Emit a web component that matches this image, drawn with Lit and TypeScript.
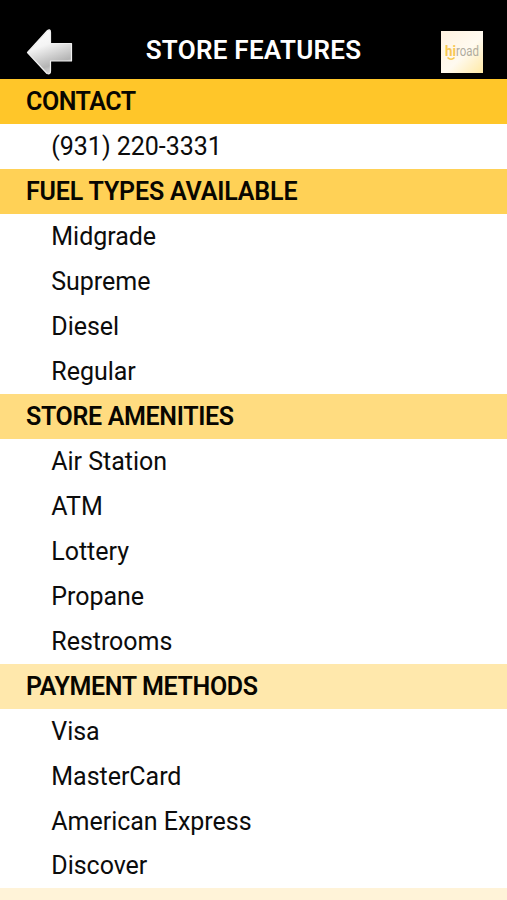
import { LitElement, html, css } from "lit";
import { customElement } from "lit/decorators.js";

interface Section {
  title: string;
  tone: string;
  tracking: number;
  items: string[];
}

const SECTIONS: Section[] = [
  { title: "CONTACT", tone: "#ffc629", tracking: -0.45, items: ["(931) 220-3331"] },
  { title: "FUEL TYPES AVAILABLE", tone: "#ffd156", tracking: -0.17, items: ["Midgrade", "Supreme", "Diesel", "Regular"] },
  { title: "STORE AMENITIES", tone: "#ffdc80", tracking: -0.34, items: ["Air Station", "ATM", "Lottery", "Propane", "Restrooms"] },
  { title: "PAYMENT METHODS", tone: "#ffe8ac", tracking: -0.36, items: ["Visa", "MasterCard", "American Express", "Discover"] },
  { title: "", tone: "#fff3d8", tracking: 0, items: [] },
];

@customElement("app-root")
export class AppRoot extends LitElement {
  static styles = css`
    :host {
      display: block;
      height: 900px;
      overflow: hidden;
      background: #fff;
      color: #0c0c0c;
      font-family: Roboto, sans-serif;
    }
    header {
      display: grid;
      grid-template-columns: 100px 1fr 100px;
      height: 79px;
      box-sizing: border-box;
      padding-top: 25px;
      background: #000;
      align-items: center;
    }
    .back {
      display: block;
      margin-left: 24px;
    }
    h1 {
      margin: -4px 0 0;
      color: #fff;
      font-size: 26px;
      line-height: 50px;
      font-weight: 600;
      letter-spacing: 0.27px;
      text-align: center;
      white-space: nowrap;
    }
    .logo {
      justify-self: end;
      margin-right: 24px;
      display: block;
    }
    .row {
      height: 44.975px;
      line-height: 45px;
      font-size: 25px;
      padding-left: 51.3px;
      letter-spacing: -0.03px;
      white-space: nowrap;
    }
    h2.row {
      margin: 0;
      padding-left: 26px;
      color: #080600;
      font-weight: 600;
    }
  `;

  render() {
    return html`
      <header>
        <svg class="back" width="50" height="50" viewBox="0 0 50 50">
          <defs>
            <linearGradient id="metal" x1="0.1" y1="0" x2="0.45" y2="1">
              <stop offset="0" stop-color="#fff" />
              <stop offset="0.4" stop-color="#f4f4f4" />
              <stop offset="0.85" stop-color="#b4b4b4" />
              <stop offset="1" stop-color="#d8d8d8" />
            </linearGradient>
          </defs>
          <path d="M3.500 25.500 23.500 3.500Q26.500 1.500 26.500 5.500V16.500H47.500V34H26.500V44Q26.500 48 23 46.500Z" fill="url(#metal)" stroke="#f0f0f0" stroke-width="1.200" stroke-linejoin="round" />
        </svg>
        <h1>STORE FEATURES</h1>
        <svg class="logo" width="42" height="42" viewBox="0 0 42 42">
          <defs>
            <linearGradient id="tile" x1="0" y1="0" x2="1" y2="1">
              <stop offset="0" stop-color="#fff2e0" />
              <stop offset="0.55" stop-color="#fffaf0" />
              <stop offset="1" stop-color="#ffe9a4" />
            </linearGradient>
          </defs>
          <rect width="42" height="42" fill="url(#tile)" />
          <text x="4" y="25" font-size="15" font-weight="700" fill="#f8c850" textLength="11" lengthAdjust="spacingAndGlyphs">hi</text>
          <text x="15" y="25" font-size="14" fill="#b0ac9e" textLength="23" lengthAdjust="spacingAndGlyphs">road</text>
          <path d="M6.500 26.500Q10 30 13.500 26.500" fill="none" stroke="#f8c850" stroke-width="1.500" />
        </svg>
      </header>
      <main>
        ${SECTIONS.map(
          (s) => html`<section>
            <h2 class="row" style="background:${s.tone};letter-spacing:${s.tracking}px">${s.title}</h2>
            ${s.items.map((i) => html`<div class="row">${i}</div>`)}
          </section>`,
        )}
      </main>
    `;
  }
}
